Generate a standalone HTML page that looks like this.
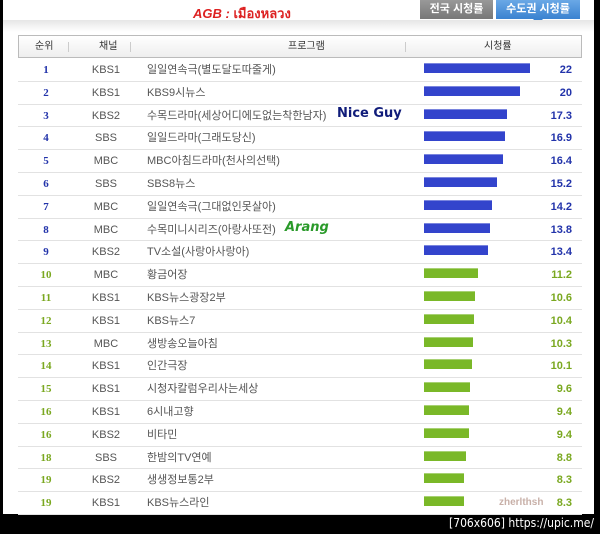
<!DOCTYPE html>
<html><head><meta charset="utf-8"><style>
body{margin:0;width:600px;height:534px;background:#000;position:relative;overflow:hidden;font-family:"Liberation Sans","Noto Sans CJK KR",sans-serif}
#w{position:absolute;left:3px;top:0;width:591px;height:514px;background:#fff}
.tab{position:absolute;top:0;height:19px;color:#fff;font-size:11px;font-weight:bold;text-align:center;line-height:19px}
.row{position:absolute;left:15px;width:564px;height:22.8px;border-bottom:1px solid #e2e2e2}
.rk{position:absolute;left:0;width:56px;text-align:center;font-family:"Liberation Serif",serif;font-weight:bold;font-size:11px;top:1px}
.ch{position:absolute;left:58px;width:60px;text-align:center;font-size:11px;color:#555;top:1px}
.pg{position:absolute;left:129px;font-size:11px;color:#555;top:1px}
.bar{position:absolute;left:406px;height:10px;top:3px;border-top:2px solid #fff;box-shadow:inset 0 1px 0 rgba(255,255,255,.35)}
.num{position:absolute;right:10px;font-size:11px;font-weight:bold;top:1px}
.row div{line-height:22px}
</style></head><body><div id="w">
<div style="position:absolute;left:190px;top:3px;color:#d22;font-size:13px;font-weight:bold;font-style:italic">AGB : <span style="font-style:normal;font-family:'DejaVu Sans',sans-serif">เมืองหลวง</span></div>
<div class="tab" style="left:417px;width:73px;background:linear-gradient(#999,#777)">전국 시청률</div>
<div class="tab" style="left:493px;width:84px;background:linear-gradient(#6aa8e6,#3a82d0)">수도권 시청률</div>
<div style="position:absolute;left:530px;top:19px;width:0;height:0;border-left:5px solid transparent;border-right:5px solid transparent;border-top:5px solid #3a82d0"></div>
<div style="position:absolute;left:0;top:20px;width:591px;height:12px;background:linear-gradient(#e6e6e6,#fff)"></div>
<div style="position:absolute;left:15px;top:35px;width:562px;height:21px;border:1px solid #bbb;background:linear-gradient(#fff,#eee);font-size:10px;color:#333;line-height:21px">
<span style="position:absolute;left:16px">순위</span><span style="position:absolute;left:80px">채널</span><span style="position:absolute;left:269px">프로그램</span><span style="position:absolute;left:465px">시청률</span>
<span style="position:absolute;left:49px;top:6px;width:1px;height:10px;background:#ccc"></span><span style="position:absolute;left:111px;top:6px;width:1px;height:10px;background:#ccc"></span><span style="position:absolute;left:386px;top:6px;width:1px;height:10px;background:#ccc"></span>
</div>
<div id="rows"></div>
<div style="position:absolute;left:334px;top:106px;color:#101c7a;font-weight:bold;font-size:13px;font-family:'DejaVu Sans',sans-serif">Nice Guy</div>
<div style="position:absolute;left:282px;top:220px;color:#2a9a2a;font-weight:bold;font-style:italic;font-size:13px;font-family:'DejaVu Sans',sans-serif">Arang</div>
<div style="position:absolute;left:496px;top:497px;color:#c8b0a8;font-weight:bold;font-size:10px">zherlthsh</div>
</div>
<div style="position:absolute;right:6px;top:516px;color:#fff;font-size:12px;font-family:'DejaVu Sans Condensed','DejaVu Sans',sans-serif">[706x606] https://upic.me/</div>
<script>
var d=[[1,"KBS1","일일연속극(별도달도따줄게)",22],[2,"KBS1","KBS9시뉴스",20],[3,"KBS2","수목드라마(세상어디에도없는착한남자)",17.3],[4,"SBS","일일드라마(그래도당신)",16.9],[5,"MBC","MBC아침드라마(천사의선택)",16.4],[6,"SBS","SBS8뉴스",15.2],[7,"MBC","일일연속극(그대없인못살아)",14.2],[8,"MBC","수목미니시리즈(아랑사또전)",13.8],[9,"KBS2","TV소설(사랑아사랑아)",13.4],[10,"MBC","황금어장",11.2],[11,"KBS1","KBS뉴스광장2부",10.6],[12,"KBS1","KBS뉴스7",10.4],[13,"MBC","생방송오늘아침",10.3],[14,"KBS1","인간극장",10.1],[15,"KBS1","시청자칼럼우리사는세상",9.6],[16,"KBS1","6시내고향",9.4],[16,"KBS2","비타민",9.4],[18,"SBS","한밤의TV연예",8.8],[19,"KBS2","생생정보통2부",8.3],[19,"KBS1","KBS뉴스라인",8.3]];
var h="";d.forEach(function(r,i){var b=r[0]<10,c=b?"#2233aa":"#7aa820",bc=b?"#3344cc":"#7ab828";var n=(r[3]%1?r[3].toFixed(1):r[3]);
h+='<div class="row" style="top:'+(58+i*22.8)+'px"><div class="rk" style="color:'+c+'">'+r[0]+'</div><div class="ch">'+r[1]+'</div><div class="pg">'+r[2]+'</div><div class="bar" style="width:'+Math.round(r[3]*4.8)+'px;background:'+bc+'"></div><div class="num" style="color:'+c+'">'+n+'</div></div>';});
document.getElementById("rows").innerHTML=h;
</script>
</body></html>
